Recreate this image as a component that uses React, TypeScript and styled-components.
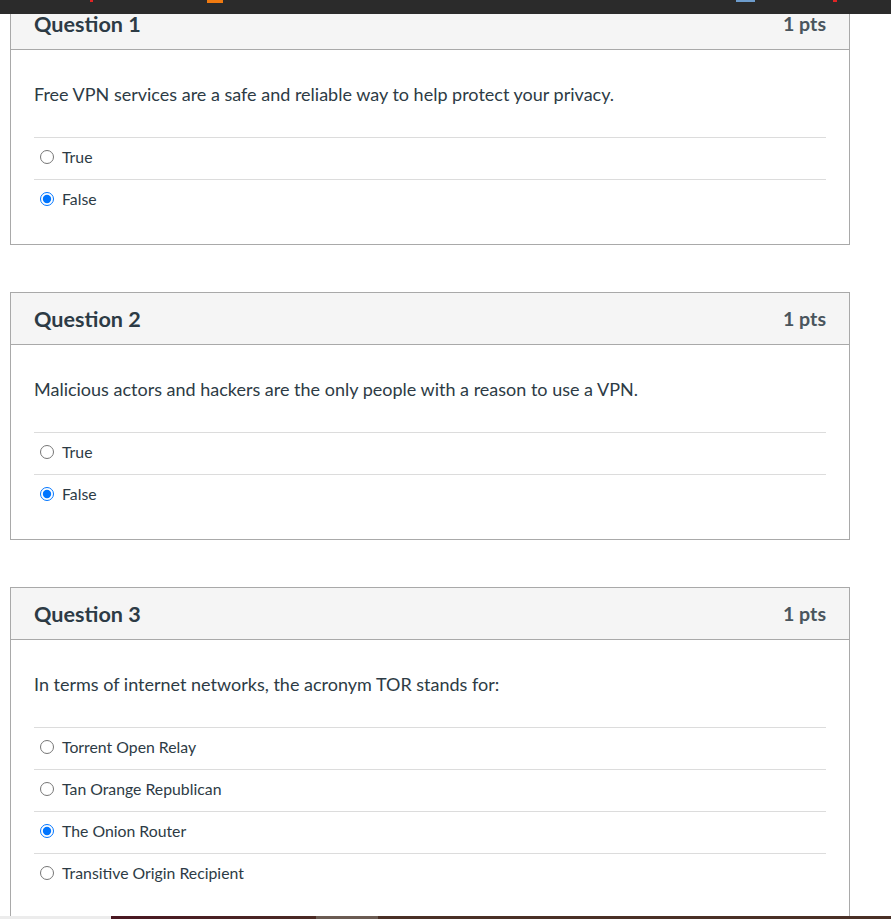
import React from "react";
import styled, { createGlobalStyle } from "styled-components";

const Global = createGlobalStyle`
  html, body { margin: 0; padding: 0; background: #ffffff; overflow: hidden; }
  body { font-family: Lato, "Noto Sans", "Liberation Sans", sans-serif; color: #2d3b45; }
`;

const TopBar = styled.div`
  position: fixed;
  top: 0;
  left: 0;
  right: 0;
  height: 14px;
  background: #2b2b2b;
  z-index: 10;
`;

const Mark = styled.span<{ $left: number; $width: number; $color: string; $h: number }>`
  position: absolute;
  top: 0;
  left: ${(p) => p.$left}px;
  width: ${(p) => p.$width}px;
  height: ${(p) => p.$h}px;
  background: ${(p) => p.$color};
`;

const BottomBar = styled.div`
  position: fixed;
  bottom: 0;
  left: 0;
  right: 0;
  height: 3px;
  display: flex;
  z-index: 10;
  background: #4a3026;
`;

const BarSeg = styled.span<{ $w: number; $bg: string }>`
  width: ${(p) => p.$w}px;
  height: 100%;
  background: ${(p) => p.$bg};
`;

const Page = styled.div`
  margin-top: -3px;
  padding-left: 10px;
  width: 840px;
  display: flex;
  flex-direction: column;
  gap: 47px;
`;

const Box = styled.section`
  border: 1px solid #a9a9a9;
  background: #fff;
`;

const Header = styled.header`
  height: 51px;
  background: #f5f5f5;
  border-bottom: 1px solid #a9a9a9;
  display: flex;
  align-items: center;
  justify-content: space-between;
  padding: 0 23px;
`;

const Title = styled.h2`
  margin: 0;
  font-size: 21.6px;
  font-weight: 700;
  color: #2d3b45;
`;

const Pts = styled.span`
  font-size: 19.6px;
  font-weight: 700;
  color: #4a555d;
`;

const Body = styled.div`
  padding: 32px 23px 23px;
`;

const QText = styled.p`
  margin: 0 0 30px;
  font-size: 18px;
  line-height: 25px;
  color: #2d3b45;
`;

const Answer = styled.label`
  display: flex;
  align-items: center;
  height: 37px;
  padding-bottom: 4px;
  border-top: 1px solid #dcdcdc;
  font-size: 15.8px;
  color: #2d3b45;
`;

const Radio = styled.input`
  margin: 0 8px 0 6px;
  width: 14px;
  height: 14px;
`;

type Q = { title: string; text: string; answers: string[]; checked: number };

const questions: Q[] = [
  {
    title: "Question 1",
    text: "Free VPN services are a safe and reliable way to help protect your privacy.",
    answers: ["True", "False"],
    checked: 1,
  },
  {
    title: "Question 2",
    text: "Malicious actors and hackers are the only people with a reason to use a VPN.",
    answers: ["True", "False"],
    checked: 1,
  },
  {
    title: "Question 3",
    text: "In terms of internet networks, the acronym TOR stands for:",
    answers: ["Torrent Open Relay", "Tan Orange Republican", "The Onion Router", "Transitive Origin Recipient"],
    checked: 2,
  },
];

export default function App() {
  return (
    <>
      <Global />
      <TopBar>
        <Mark $left={90} $width={3} $h={2} $color="#e02424" />
        <Mark $left={207} $width={16} $h={3} $color="#f07a10" />
        <Mark $left={736} $width={19} $h={2} $color="#6d9ccc" />
        <Mark $left={833} $width={4} $h={2} $color="#e02424" />
      </TopBar>
      <Page>
        {questions.map((q, qi) => (
          <Box key={qi}>
            <Header>
              <Title>{q.title}</Title>
              <Pts>1 pts</Pts>
            </Header>
            <Body>
              <QText>{q.text}</QText>
              {q.answers.map((a, ai) => (
                <Answer key={ai}>
                  <Radio type="radio" name={`q${qi}`} defaultChecked={ai === q.checked} />
                  {a}
                </Answer>
              ))}
            </Body>
          </Box>
        ))}
      </Page>
      <BottomBar>
        <BarSeg $w={111} $bg="#ececec" />
        <BarSeg $w={205} $bg="linear-gradient(90deg, #4a1722, #4a2a24)" />
        <BarSeg $w={62} $bg="#6b5b52" />
      </BottomBar>
    </>
  );
}
